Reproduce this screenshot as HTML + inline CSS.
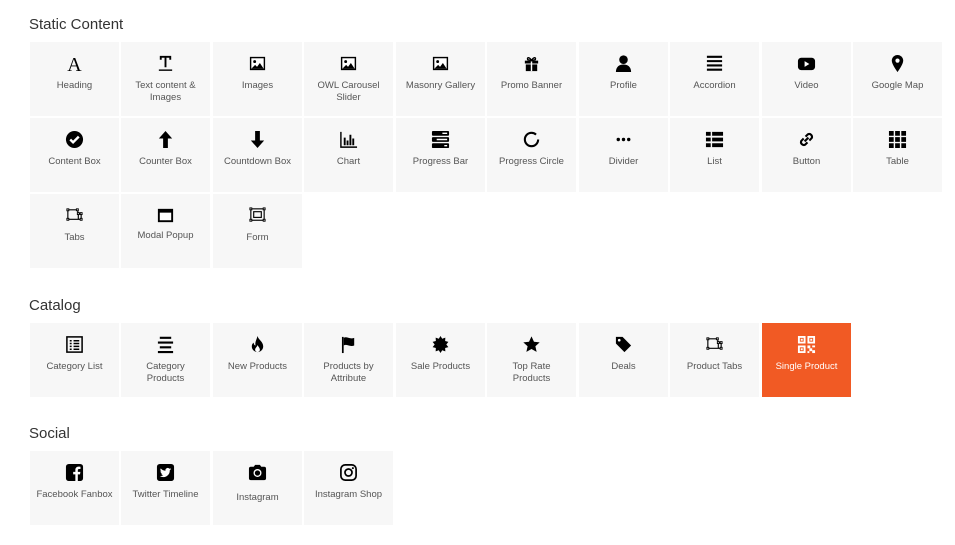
<!DOCTYPE html><html><head><meta charset="utf-8"><style>
body{margin:0;background:#fff;font-family:"Liberation Sans","DejaVu Sans",sans-serif;width:955px;height:545px;position:relative;overflow:hidden}
h2{position:absolute;left:29px;margin:0;font-weight:normal;font-size:15px;color:#333}
.t{position:absolute;width:89px;height:74px;background:#f7f7f7;text-align:center;color:#555;font-size:9.5px;line-height:12px}
.t svg{position:absolute;left:35px;top:12px;width:19px;height:19px}
.t span{position:absolute;left:2px;right:2px;top:38px}
.o{background:#f15a24;color:#fff}
</style></head><body>
<h2 style="top:16px">Static Content</h2>
<h2 style="top:297px">Catalog</h2>
<h2 style="top:425px">Social</h2>

<div class="t" style="left:30px;top:42px"><svg viewBox="0 0 20 20"><text x="10" y="18" font-family="Liberation Serif" font-size="21" text-anchor="middle" fill="#000">A</text></svg><span>Heading</span></div>
<div class="t" style="left:121px;top:42px"><svg viewBox="0 0 20 20"><path d="M4 2h12v4h-2V4h-3v10H9V4H6v2H4z" fill="#000"/><path d="M3 17h14" stroke="#000" stroke-width="1.5"/></svg><span>Text content &amp;<br>Images</span></div>
<div class="t" style="left:213px;top:42px"><svg viewBox="0 0 20 20"><rect x="2" y="3" width="16" height="14" fill="#000"/><rect x="3.5" y="4.5" width="13" height="11" fill="#fff"/><circle cx="7" cy="8" r="1.5" fill="#000"/><path d="M3.5 15.5l4-4 2 2 3-4 4 6z" fill="#000"/></svg><span>Images</span></div>
<div class="t" style="left:304px;top:42px"><svg viewBox="0 0 20 20"><rect x="2" y="3" width="16" height="14" fill="#000"/><rect x="3.5" y="4.5" width="13" height="11" fill="#fff"/><circle cx="7" cy="8" r="1.5" fill="#000"/><path d="M3.5 15.5l4-4 2 2 3-4 4 6z" fill="#000"/></svg><span>OWL Carousel<br>Slider</span></div>
<div class="t" style="left:396px;top:42px"><svg viewBox="0 0 20 20"><rect x="2" y="3" width="16" height="14" fill="#000"/><rect x="3.5" y="4.5" width="13" height="11" fill="#fff"/><circle cx="7" cy="8" r="1.5" fill="#000"/><path d="M3.5 15.5l4-4 2 2 3-4 4 6z" fill="#000"/></svg><span>Masonry Gallery</span></div>
<div class="t" style="left:487px;top:42px"><svg viewBox="0 0 20 20"><rect x="3" y="7" width="14" height="3" fill="#000"/><rect x="4" y="11" width="12" height="7" fill="#000"/><path d="M10 7v11" stroke="#fff" stroke-width="1.5"/><path d="M10 7C8 3 5 3 6 6zM10 7c2-4 5-4 4-1z" fill="none" stroke="#000" stroke-width="1.5"/></svg><span>Promo Banner</span></div>
<div class="t" style="left:579px;top:42px"><svg viewBox="0 0 20 20"><circle cx="10" cy="6" r="4.5" fill="#000"/><path d="M2 19c0-6 4-8 8-8s8 2 8 8z" fill="#000"/></svg><span>Profile</span></div>
<div class="t" style="left:670px;top:42px"><svg viewBox="0 0 20 20"><path d="M2 3h16M2 7.5h16M2 12h16M2 16.5h16" stroke="#000" stroke-width="2.2"/></svg><span>Accordion</span></div>
<div class="t" style="left:762px;top:42px"><svg viewBox="0 0 20 20"><rect x="1" y="4" width="18" height="13" rx="3.5" fill="#000"/><path d="M8 7.5v6l5-3z" fill="#fff"/></svg><span>Video</span></div>
<div class="t" style="left:853px;top:42px"><svg viewBox="0 0 20 20"><path d="M10 1a6 6 0 0 0-6 6c0 4 6 12 6 12s6-8 6-12a6 6 0 0 0-6-6z" fill="#000"/><circle cx="10" cy="7" r="2.2" fill="#fff"/></svg><span>Google Map</span></div>

<div class="t" style="left:30px;top:118px"><svg viewBox="0 0 20 20"><circle cx="10" cy="10" r="9" fill="#000"/><path d="M5.5 10l3 3 6-6" stroke="#fff" stroke-width="2.5" fill="none"/></svg><span>Content Box</span></div>
<div class="t" style="left:121px;top:118px"><svg viewBox="0 0 20 20"><path d="M10 1l7 8h-4.5v10h-5V9H3z" fill="#000"/></svg><span>Counter Box</span></div>
<div class="t" style="left:213px;top:118px"><svg viewBox="0 0 20 20"><path d="M10 19l7-8h-4.5V1h-5v10H3z" fill="#000"/></svg><span>Countdown Box</span></div>
<div class="t" style="left:304px;top:118px"><svg viewBox="0 0 20 20"><path d="M2 2v16h17" stroke="#000" stroke-width="1.5" fill="none"/><path d="M6 8v8M9 11v5M12 5v11M15 9v7" stroke="#000" stroke-width="2"/></svg><span>Chart</span></div>
<div class="t" style="left:396px;top:118px"><svg viewBox="0 0 20 20"><rect x="1" y="1" width="18" height="5" rx="1" fill="#000"/><rect x="1" y="7.5" width="18" height="5" rx="1" fill="#000"/><rect x="1" y="14" width="18" height="5" rx="1" fill="#000"/><path d="M12 3.5h5M6 10h11M14 16.5h3" stroke="#fff" stroke-width="1.5"/></svg><span>Progress Bar</span></div>
<div class="t" style="left:487px;top:118px"><svg viewBox="0 0 20 20"><circle cx="10" cy="10" r="7" fill="none" stroke="#000" stroke-width="2.2" stroke-dasharray="38 6"/></svg><span>Progress Circle</span></div>
<div class="t" style="left:579px;top:118px"><svg viewBox="0 0 20 20"><circle cx="4.5" cy="10" r="1.8" fill="#000"/><circle cx="10" cy="10" r="1.8" fill="#000"/><circle cx="15.5" cy="10" r="1.8" fill="#000"/></svg><span>Divider</span></div>
<div class="t" style="left:670px;top:118px"><svg viewBox="0 0 20 20"><path d="M1 2h5v4H1zM1 8h5v4H1zM1 14h5v4H1zM7.5 2H19v4H7.5zM7.5 8H19v4H7.5zM7.5 14H19v4H7.5z" fill="#000"/></svg><span>List</span></div>
<div class="t" style="left:762px;top:118px"><svg viewBox="0 0 20 20"><g fill="none" stroke="#000" stroke-width="2.2"><path d="M9 7l2.5-2.5a3 3 0 0 1 4 4L13 11"/><path d="M11 13l-2.5 2.5a3 3 0 0 1-4-4L7 9"/><path d="M8 12l4-4"/></g></svg><span>Button</span></div>
<div class="t" style="left:853px;top:118px"><svg viewBox="0 0 20 20"><path d="M1 1h5v5H1zM7.5 1h5v5h-5zM14 1h5v5h-5zM1 7.5h5v5H1zM7.5 7.5h5v5h-5zM14 7.5h5v5h-5zM1 14h5v5H1zM7.5 14h5v5h-5zM14 14h5v5h-5z" fill="#000"/></svg><span>Table</span></div>

<div class="t" style="left:30px;top:194px"><svg viewBox="0 0 20 20"><g fill="none" stroke="#000" stroke-width="1.2"><path d="M3 4h10l1 4v6H3zM14 8h3v6h-3"/></g><g fill="#fff" stroke="#000"><rect x="2" y="3" width="2" height="2"/><rect x="12" y="3" width="2" height="2"/><rect x="2" y="13" width="2" height="2"/><rect x="13" y="7" width="2" height="2"/><rect x="16" y="7" width="2" height="2"/><rect x="16" y="13" width="2" height="2"/></g></svg><span>Tabs</span></div>
<div class="t" style="left:121px;top:194px"><svg viewBox="0 0 20 20"><rect x="2" y="3" width="16" height="14" fill="#000"/><rect x="4" y="7" width="12" height="8" fill="#fff"/></svg><span style="top:36px">Modal Popup</span></div>
<div class="t" style="left:213px;top:194px"><svg viewBox="0 0 20 20"><g fill="none" stroke="#000" stroke-width="1.2"><rect x="3" y="3" width="14" height="12"/><rect x="6" y="6" width="8" height="6"/></g><g fill="#fff" stroke="#000"><rect x="2" y="2" width="2" height="2"/><rect x="16" y="2" width="2" height="2"/><rect x="2" y="14" width="2" height="2"/><rect x="16" y="14" width="2" height="2"/></g></svg><span>Form</span></div>

<div class="t" style="left:30px;top:323px"><svg viewBox="0 0 20 20"><rect x="2" y="2" width="16" height="16" fill="none" stroke="#000" stroke-width="1.6"/><path d="M5 6h2M9 6h6M5 9h2M9 9h6M5 12h2M9 12h6M5 15h2M9 15h6" stroke="#000" stroke-width="1.6"/></svg><span>Category List</span></div>
<div class="t" style="left:121px;top:323px"><svg viewBox="0 0 20 20"><path d="M4 3h12M2 8h16M4 13h12M2 18h16" stroke="#000" stroke-width="2.2"/></svg><span>Category<br>Products</span></div>
<div class="t" style="left:213px;top:323px"><svg viewBox="0 0 20 20"><path d="M10 1c1 4 6 6 6 11a6 6 0 0 1-12 0c0-3 2-4 2-4 0 2 1 3 2 3C7 8 9 5 10 1z" fill="#000"/><path d="M10 18a2.5 2.5 0 0 1-2.5-2.5c0-2 2.5-3.5 2.5-5 1 2 2.5 3 2.5 5A2.5 2.5 0 0 1 10 18z" fill="#fff"/></svg><span>New Products</span></div>
<div class="t" style="left:304px;top:323px"><svg viewBox="0 0 20 20"><path d="M4 2v17" stroke="#000" stroke-width="1.8"/><path d="M5 3c3-2 6 2 11 0v8c-5 2-8-2-11 0z" fill="#000"/></svg><span>Products by<br>Attribute</span></div>
<div class="t" style="left:396px;top:323px"><svg viewBox="0 0 20 20"><path d="M10 1l1.8 3 3.3-1.2-.2 3.5 3.4 1-2.2 2.7 2.2 2.7-3.4 1 .2 3.5-3.3-1.2L10 19l-1.8-3-3.3 1.2.2-3.5-3.4-1L3.9 10 1.7 7.3l3.4-1-.2-3.5 3.3 1.2z" fill="#000"/></svg><span>Sale Products</span></div>
<div class="t" style="left:487px;top:323px"><svg viewBox="0 0 20 20"><path d="M10 1.5l2.6 5.6 6 .6-4.5 4.1 1.3 6L10 14.8 4.6 17.8l1.3-6L1.4 7.7l6-.6z" fill="#000"/></svg><span>Top Rate<br>Products</span></div>
<div class="t" style="left:579px;top:323px"><svg viewBox="0 0 20 20"><path d="M2 2h7l9 9-7 7-9-9z" fill="#000"/><circle cx="5.5" cy="5.5" r="1.4" fill="#fff"/></svg><span>Deals</span></div>
<div class="t" style="left:670px;top:323px"><svg viewBox="0 0 20 20"><g fill="none" stroke="#000" stroke-width="1.2"><path d="M3 4h10l1 4v6H3zM14 8h3v6h-3"/></g><g fill="#fff" stroke="#000"><rect x="2" y="3" width="2" height="2"/><rect x="12" y="3" width="2" height="2"/><rect x="2" y="13" width="2" height="2"/><rect x="13" y="7" width="2" height="2"/><rect x="16" y="7" width="2" height="2"/><rect x="16" y="13" width="2" height="2"/></g></svg><span>Product Tabs</span></div>
<div class="t o" style="left:762px;top:323px"><svg viewBox="0 0 20 20"><g fill="#fff"><path d="M1 1h8v8H1zM11 1h8v8h-8zM1 11h8v8H1z"/></g><g fill="#f15a24"><rect x="3" y="3" width="4" height="4"/><rect x="13" y="3" width="4" height="4"/><rect x="3" y="13" width="4" height="4"/></g><g fill="#fff"><rect x="4" y="4" width="2" height="2"/><rect x="14" y="4" width="2" height="2"/><rect x="4" y="14" width="2" height="2"/><rect x="11" y="11" width="3" height="3"/><rect x="16" y="11" width="3" height="2"/><rect x="13" y="14" width="3" height="3"/><rect x="11" y="17" width="2" height="2"/><rect x="16" y="16" width="3" height="3"/></g></svg><span>Single Product</span></div>

<div class="t" style="left:30px;top:451px"><svg viewBox="0 0 20 20"><rect x="1" y="1" width="18" height="18" rx="3" fill="#000"/><path d="M13.5 19v-7h2.3l.4-2.7h-2.7V7.6c0-.8.3-1.3 1.4-1.3h1.4V3.9c-.3 0-1.1-.1-2-.1-2 0-3.4 1.2-3.4 3.5v2H8.6V12h2.3v7z" fill="#fff"/></svg><span>Facebook Fanbox</span></div>
<div class="t" style="left:121px;top:451px"><svg viewBox="0 0 20 20"><rect x="1" y="1" width="18" height="18" rx="3" fill="#000"/><path d="M16 6.3c-.4.2-.9.3-1.4.4.5-.3.9-.8 1-1.3-.5.3-1 .5-1.5.6A2.4 2.4 0 0 0 10 8.2 6.8 6.8 0 0 1 5 5.7a2.4 2.4 0 0 0 .7 3.2c-.4 0-.8-.1-1.100-.3 0 1.200.8 2.100 1.900 2.400-.4.1-.7.1-1.100 0 .3 1 1.200 1.600 2.200 1.700A4.800 4.800 0 0 1 4 13.700a6.800 6.800 0 0 0 10.500-6.100c.6-.3 1.100-.8 1.500-1.300z" fill="#fff"/></svg><span>Twitter Timeline</span></div>
<div class="t" style="left:213px;top:451px"><svg viewBox="0 0 20 20"><path d="M1 6a2 2 0 0 1 2-2h3l1.5-2h5L14 4h3a2 2 0 0 1 2 2v10a2 2 0 0 1-2 2H3a2 2 0 0 1-2-2z" fill="#000"/><circle cx="10" cy="10.5" r="4.2" fill="#fff"/><circle cx="10" cy="10.5" r="2.8" fill="#000"/></svg><span style="top:41px">Instagram</span></div>
<div class="t" style="left:304px;top:451px"><svg viewBox="0 0 20 20"><rect x="2" y="2" width="16" height="16" rx="4.5" fill="none" stroke="#000" stroke-width="1.8"/><circle cx="10" cy="10" r="3.7" fill="none" stroke="#000" stroke-width="1.8"/><circle cx="14.6" cy="5.4" r="1.1" fill="#000"/></svg><span>Instagram Shop</span></div>
</body></html>
